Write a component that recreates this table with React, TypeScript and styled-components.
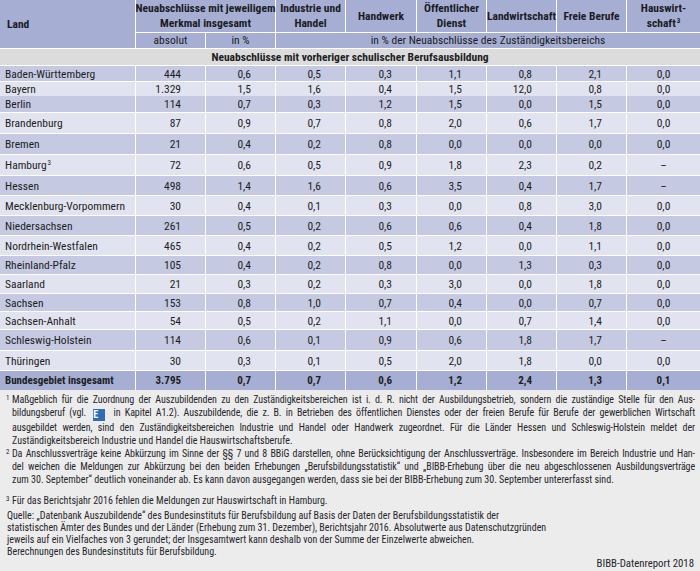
import React from "react";
import styled, { createGlobalStyle } from "styled-components";

const FONT = `"Roboto Condensed", "Liberation Sans Narrow", Roboto, "Noto Sans", sans-serif`;
const COLS = "135px 69px 69px 69px 70px 69px 69px 69px 73px";

const GlobalStyle = createGlobalStyle`
  html, body { margin: 0; padding: 0; background: #ececec; }
  body { font-family: ${FONT}; font-stretch: condensed; color: #1d1d22; }
`;

const Page = styled.div`
  width: 700px;
  height: 571px;
  overflow: hidden;
  display: flex;
  flex-direction: column;
  background: #ececec;
`;

const Table = styled.div`
  display: flex;
  flex-direction: column;
  gap: 1px;
  background: #ffffff;
`;

const HeaderGrid = styled.div`
  display: grid;
  grid-template-columns: ${COLS};
  grid-template-rows: 32px 15px;
  gap: 1px;
`;

const HeadCell = styled.div<{ $col: string; $row: string; $bold?: boolean; $left?: boolean }>`
  grid-column: ${(p) => p.$col};
  grid-row: ${(p) => p.$row};
  background: #a6afd3;
  display: flex;
  align-items: center;
  justify-content: ${(p) => (p.$left ? "flex-start" : "center")};
  padding-left: ${(p) => (p.$left ? "7px" : "0")};
  text-align: center;
  font-size: 11.5px;
  line-height: 15px;
  font-weight: ${(p) => (p.$bold ? 700 : 400)};
  white-space: nowrap;
  color: #1b1b25;
`;

const Band = styled.div`
  height: 16px;
  background: #dcdcdc;
  display: flex;
  align-items: center;
  justify-content: center;
  font-size: 11.5px;
  font-weight: 700;
`;

const Row = styled.div<{ $h: number }>`
  display: grid;
  grid-template-columns: ${COLS};
  column-gap: 1px;
  height: ${(p) => p.$h}px;
`;

type Tone = "dark" | "light" | "total";
const toneBg: Record<Tone, string> = {
  dark: "#c5cae2",
  light: "#e1e4f0",
  total: "#a6afd3",
};

const Cell = styled.div<{ $tone: Tone; $kind: "name" | "num" | "center" }>`
  background: ${(p) => toneBg[p.$tone]};
  display: flex;
  align-items: center;
  justify-content: ${(p) =>
    p.$kind === "name" ? "flex-start" : p.$kind === "num" ? "flex-end" : "center"};
  padding-left: ${(p) => (p.$kind === "name" ? "5px" : "0")};
  padding-right: ${(p) => (p.$kind === "num" ? "24px" : "0")};
  font-size: ${(p) => (p.$tone === "total" ? "11px" : "11.5px")};
  font-weight: ${(p) => (p.$tone === "total" ? 700 : 400)};
  white-space: nowrap;
`;

const Sup = styled.sup`
  font-size: 7px;
  line-height: 0;
  vertical-align: 4px;
  margin-left: 1px;
`;

const Notes = styled.div`
  padding: 3px 5px 0 5px;
  display: flex;
  flex-direction: column;
  color: #26262b;
  font-size: 10px;
`;

const Note = styled.div<{ $gap?: number }>`
  display: grid;
  grid-template-columns: 7px 1fr;
  margin-top: ${(p) => p.$gap ?? 0}px;
`;

const Marker = styled.span`
  font-size: 7px;
  line-height: 11px;
  padding-left: 1px;
`;

const Lines = styled.div`
  display: flex;
  flex-direction: column;
`;

const Line = styled.div<{ $justify?: boolean; $lh?: number }>`
  line-height: ${(p) => p.$lh ?? 13}px;
  white-space: ${(p) => (p.$justify ? "normal" : "nowrap")};
  letter-spacing: ${(p) => (p.$justify ? "-0.1px" : "0")};
  text-align: ${(p) => (p.$justify ? "justify" : "left")};
  text-align-last: ${(p) => (p.$justify ? "justify" : "left")};
`;

const Source = styled.div`
  margin-top: 3px;
  padding-left: 2px;
  display: flex;
  flex-direction: column;
`;

const Credit = styled.div`
  line-height: 12px;
  text-align: right;
  padding-right: 1px;
  font-size: 10.8px;
`;

const EBadge = styled.span`
  display: inline-block;
  width: 12px;
  height: 12px;
  line-height: 12px;
  margin: 0 4px 0 3px;
  background: #2f6db6;
  color: #fff;
  font-weight: 700;
  font-size: 10px;
  text-align: center;
  vertical-align: -2px;
`;

type DataRow = { name: string; sup?: string; vals: string[]; h: number };

const rows: DataRow[] = [
  { name: "Baden-Württemberg", vals: ["444", "0,6", "0,5", "0,3", "1,1", "0,8", "2,1", "0,0"], h: 15 },
  { name: "Bayern", vals: ["1.329", "1,5", "1,6", "0,4", "1,5", "12,0", "0,8", "0,0"], h: 13 },
  { name: "Berlin", vals: ["114", "0,7", "0,3", "1,2", "1,5", "0,0", "1,5", "0,0"], h: 16 },
  { name: "Brandenburg", vals: ["87", "0,9", "0,7", "0,8", "2,0", "0,6", "1,7", "0,0"], h: 20 },
  { name: "Bremen", vals: ["21", "0,4", "0,2", "0,8", "0,0", "0,0", "0,0", "0,0"], h: 20 },
  { name: "Hamburg", sup: "3", vals: ["72", "0,6", "0,5", "0,9", "1,8", "2,3", "0,2", "–"], h: 20 },
  { name: "Hessen", vals: ["498", "1,4", "1,6", "0,6", "3,5", "0,4", "1,7", "–"], h: 19 },
  { name: "Mecklenburg-Vorpommern", vals: ["30", "0,4", "0,1", "0,3", "0,0", "0,8", "3,0", "0,0"], h: 19 },
  { name: "Niedersachsen", vals: ["261", "0,5", "0,2", "0,6", "0,6", "0,4", "1,8", "0,0"], h: 19 },
  { name: "Nordrhein-Westfalen", vals: ["465", "0,4", "0,2", "0,5", "1,2", "0,0", "1,1", "0,0"], h: 19 },
  { name: "Rheinland-Pfalz", vals: ["105", "0,4", "0,2", "0,8", "0,0", "1,3", "0,3", "0,0"], h: 18 },
  { name: "Saarland", vals: ["21", "0,3", "0,2", "0,3", "3,0", "0,0", "1,8", "0,0"], h: 18 },
  { name: "Sachsen", vals: ["153", "0,8", "1,0", "0,7", "0,4", "0,0", "0,7", "0,0"], h: 17 },
  { name: "Sachsen-Anhalt", vals: ["54", "0,5", "0,2", "1,1", "0,0", "0,7", "1,4", "0,0"], h: 17 },
  { name: "Schleswig-Holstein", vals: ["114", "0,6", "0,1", "0,9", "0,6", "1,8", "1,7", "–"], h: 20 },
  { name: "Thüringen", vals: ["30", "0,3", "0,1", "0,5", "2,0", "1,8", "0,0", "0,0"], h: 19 },
];

const total: DataRow = {
  name: "Bundesgebiet insgesamt",
  vals: ["3.795", "0,7", "0,7", "0,6", "1,2", "2,4", "1,3", "0,1"],
  h: 19,
};

function TableRow({ row, tone }: { row: DataRow; tone: Tone }) {
  return (
    <Row $h={row.h}>
      <Cell $tone={tone} $kind="name">
        <span>
          {row.name}
          {row.sup && <Sup>{row.sup}</Sup>}
        </span>
      </Cell>
      {row.vals.map((v, i) => (
        <Cell key={i} $tone={tone} $kind={i === 7 ? "center" : "num"}>
          {v}
        </Cell>
      ))}
    </Row>
  );
}

export default function App() {
  return (
    <Page>
      <GlobalStyle />
      <Table>
        <HeaderGrid>
          <HeadCell $col="1" $row="1 / 3" $bold $left>
            Land
          </HeadCell>
          <HeadCell $col="2 / 4" $row="1" $bold>
            Neuabschlüsse mit jeweiligem
            <br />
            Merkmal insgesamt
          </HeadCell>
          <HeadCell $col="4" $row="1" $bold>
            Industrie und
            <br />
            Handel
          </HeadCell>
          <HeadCell $col="5" $row="1" $bold>
            Handwerk
          </HeadCell>
          <HeadCell $col="6" $row="1" $bold>
            Öffentlicher
            <br />
            Dienst
          </HeadCell>
          <HeadCell $col="7" $row="1" $bold>
            Landwirtschaft
          </HeadCell>
          <HeadCell $col="8" $row="1" $bold>
            Freie Berufe
          </HeadCell>
          <HeadCell $col="9" $row="1" $bold>
            <span>
              Hauswirt-
              <br />
              schaft<Sup>3</Sup>
            </span>
          </HeadCell>
          <HeadCell $col="2" $row="2">
            absolut
          </HeadCell>
          <HeadCell $col="3" $row="2">
            in %
          </HeadCell>
          <HeadCell $col="4 / 10" $row="2">
            in % der Neuabschlüsse des Zuständigkeitsbereichs
          </HeadCell>
        </HeaderGrid>
        <Band>Neuabschlüsse mit vorheriger schulischer Berufsausbildung</Band>
        {rows.map((r, i) => (
          <TableRow key={r.name} row={r} tone={i % 2 === 0 ? "dark" : "light"} />
        ))}
        <TableRow row={total} tone="total" />
      </Table>
      <Notes>
        <Note>
          <Marker>1</Marker>
          <Lines>
            <Line $justify>
              Maßgeblich für die Zuordnung der Auszubildenden zu den Zuständigkeitsbereichen ist i. d. R. nicht der
              Ausbildungsbetrieb, sondern die zuständige Stelle für den Aus-
            </Line>
            <Line $justify>
              bildungsberuf (vgl. <EBadge>E</EBadge> in Kapitel A1.2). Auszubildende, die z. B. in Betrieben des
              öffentlichen Dienstes oder der freien Berufe für Berufe der gewerblichen Wirtschaft
            </Line>
            <Line $justify>
              ausgebildet werden, sind den Zuständigkeitsbereichen Industrie und Handel oder Handwerk zugeordnet. Für
              die Länder Hessen und Schleswig-Holstein meldet der
            </Line>
            <Line>Zuständigkeitsbereich Industrie und Handel die Hauswirtschaftsberufe.</Line>
          </Lines>
        </Note>
        <Note>
          <Marker>2</Marker>
          <Lines>
            <Line $justify>
              Da Anschlussverträge keine Abkürzung im Sinne der §§ 7 und 8 BBiG darstellen, ohne Berücksichtigung der
              Anschlussverträge. Insbesondere im Bereich Industrie und Han-
            </Line>
            <Line $justify>
              del weichen die Meldungen zur Abkürzung bei den beiden Erhebungen „Berufsbildungsstatistik“ und
              „BIBB-Erhebung über die neu abgeschlossenen Ausbildungsverträge
            </Line>
            <Line>
              zum 30. September“ deutlich voneinander ab. Es kann davon ausgegangen werden, dass sie bei der
              BIBB-Erhebung zum 30. September untererfasst sind.
            </Line>
          </Lines>
        </Note>
        <Note $gap={8}>
          <Marker>3</Marker>
          <Lines>
            <Line>Für das Berichtsjahr 2016 fehlen die Meldungen zur Hauswirtschaft in Hamburg.</Line>
          </Lines>
        </Note>
        <Source>
          <Line $lh={12}>
            Quelle: „Datenbank Auszubildende“ des Bundesinstituts für Berufsbildung auf Basis der Daten der
            Berufsbildungsstatistik der
          </Line>
          <Line $lh={12}>
            statistischen Ämter des Bundes und der Länder (Erhebung zum 31. Dezember), Berichtsjahr 2016. Absolutwerte
            aus Datenschutzgründen
          </Line>
          <Line $lh={12}>
            jeweils auf ein Vielfaches von 3 gerundet; der Insgesamtwert kann deshalb von der Summe der Einzelwerte
            abweichen.
          </Line>
          <Line $lh={12}>Berechnungen des Bundesinstituts für Berufsbildung.</Line>
        </Source>
        <Credit>BIBB-Datenreport 2018</Credit>
      </Notes>
    </Page>
  );
}
